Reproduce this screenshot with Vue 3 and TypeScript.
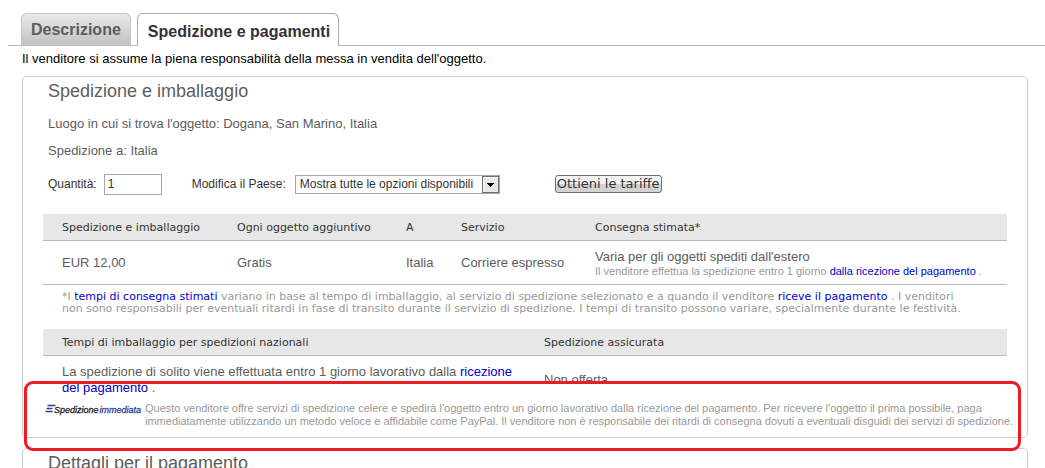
<script setup lang="ts">
import { ref } from 'vue'

interface ShippingOption {
  cost: string
  additional: string
  destination: string
  service: string
  estimate: string
}

const quantity = ref('1')
const country = ref('all')
const options: ShippingOption[] = [
  {
    cost: 'EUR 12,00',
    additional: 'Gratis',
    destination: 'Italia',
    service: 'Corriere espresso',
    estimate: "Varia per gli oggetti spediti dall'estero",
  },
]
</script>

<template>
  <div class="page">
    <nav class="tabs">
      <a class="tab" href="#descrizione">Descrizione</a>
      <a class="tab active" href="#spedizione" aria-current="page">Spedizione e pagamenti</a>
    </nav>

    <main class="content">
      <p class="intro">Il venditore si assume la piena responsabilità della messa in vendita dell'oggetto.</p>

      <section id="spedizione" class="panel">
        <h2>Spedizione e imballaggio</h2>
        <p class="fact">Luogo in cui si trova l'oggetto: Dogana, San Marino, Italia</p>
        <p class="fact">Spedizione a: Italia</p>

        <form class="rates" @submit.prevent>
          <label for="quantity">Quantità:</label>
          <input id="quantity" v-model="quantity" type="text" />
          <label class="country-label" for="country">Modifica il Paese:</label>
          <span class="select">
            <select id="country" v-model="country">
              <option value="all">Mostra tutte le opzioni disponibili</option>
            </select>
            <svg class="arrow" viewBox="0 0 17 17" aria-hidden="true">
              <rect x="0.5" y="0.5" width="16" height="16" fill="#e9e9e9" stroke="#6f6f6f" />
              <path d="M1.5 15.5v-14h14" fill="none" stroke="#fff" />
              <path d="M5 7h7v1h-1v1h-1v1H9v1H8v-1H7V9H6V8H5z" fill="#000" />
            </svg>
          </span>
          <button type="submit">Ottieni le tariffe</button>
        </form>

        <table class="grid options">
          <thead>
            <tr>
              <th class="c-cost">Spedizione e imballaggio</th>
              <th class="c-extra">Ogni oggetto aggiuntivo</th>
              <th class="c-to">A</th>
              <th class="c-service">Servizio</th>
              <th>Consegna stimata*</th>
            </tr>
          </thead>
          <tbody>
            <tr v-for="option in options" :key="option.service">
              <td>{{ option.cost }}</td>
              <td>{{ option.additional }}</td>
              <td>{{ option.destination }}</td>
              <td>{{ option.service }}</td>
              <td>
                {{ option.estimate }}
                <small>Il venditore effettua la spedizione entro 1 giorno <a href="#ricezione">dalla ricezione del pagamento</a> .</small>
              </td>
            </tr>
          </tbody>
        </table>

        <p class="footnote">
          *I <a href="#tempi">tempi di consegna stimati</a> variano in base al tempo di imballaggio, al servizio di spedizione selezionato e a quando il venditore <a href="#ricezione">riceve il pagamento</a> . I venditori<br />
          non sono responsabili per eventuali ritardi in fase di transito durante il servizio di spedizione. I tempi di transito possono variare, specialmente durante le festività.
        </p>

        <table class="grid handling">
          <thead>
            <tr>
              <th>Tempi di imballaggio per spedizioni nazionali</th>
              <th>Spedizione assicurata</th>
            </tr>
          </thead>
          <tbody>
            <tr>
              <td>
                La spedizione di solito viene effettuata entro 1 giorno lavorativo dalla <a href="#ricezione">ricezione<br />del pagamento</a> .
              </td>
              <td>Non offerta</td>
            </tr>
          </tbody>
        </table>

        <div class="notice">
          <svg class="logo" viewBox="0 0 97 14" role="img" aria-label="Spedizione immediata">
            <path d="M2.500 3.500h8M1.500 6.500h6M0.500 9.500h7" fill="none" stroke="#2a3f94" stroke-width="1.500" />
            <text x="9" y="11" class="word"><tspan class="dark">Spedizione</tspan><tspan class="blue" dx="1">immediata</tspan></text>
          </svg>
          <p>
            Questo venditore offre servizi di spedizione celere e spedirà l'oggetto entro un giorno lavorativo dalla ricezione del pagamento. Per ricevere l'oggetto il prima possibile, paga<br />
            immediatamente utilizzando un metodo veloce e affidabile come PayPal. Il venditore non è responsabile dei ritardi di consegna dovuti a eventuali disguidi dei servizi di spedizione.
          </p>
          <div class="highlight"></div>
        </div>
      </section>

      <section class="panel">
        <h2>Dettagli per il pagamento</h2>
      </section>
    </main>
  </div>
</template>

<style>
body {
  margin: 0;
  background: #fff;
}
</style>

<style scoped>
.page {
  height: 100vh;
  overflow: hidden;
  box-sizing: border-box;
  padding: 13px 0 0 8px;
  font-family: "Liberation Sans", Arial, sans-serif;
  font-size: 12px;
  color: #000;
}

p,
h2 {
  margin: 0;
}

a {
  color: #00c;
  text-decoration: none;
}

.tabs {
  display: flex;
  gap: 6px;
  height: 32px;
  padding-left: 13px;
  border-bottom: 1px solid #bbb;
}

.tab {
  box-sizing: border-box;
  height: 32px;
  padding: 0 9px;
  border: 1px solid #c4c4c4;
  border-bottom: 0;
  border-radius: 6px 6px 0 0;
  background: linear-gradient(#e9e9e9, #c2c2c2);
  color: #5c5c5c;
  font-size: 16px;
  font-weight: bold;
  line-height: 32px;
}

.tab.active {
  height: 33px;
  padding: 0 8px 0 10px;
  border-color: #aaa;
  background: #fff;
  color: #333;
  line-height: 35px;
}

.content {
  padding: 0 17px 0 14px;
}

.intro {
  padding: 5px 0 9px;
  font-size: 13px;
  line-height: 16px;
}

.panel {
  border: 1px solid #ccc;
  border-radius: 5px;
  padding: 0 20px 9px;
  margin-bottom: 10px;
}

.panel h2 {
  padding: 3px 0 10px 5px;
  color: #5d5d5d;
  font-size: 18px;
  font-weight: normal;
  line-height: 22px;
}

.fact {
  padding: 4px 0 7px 5px;
  color: #5d5d5d;
  font-size: 13px;
  line-height: 16px;
}

.rates {
  display: flex;
  align-items: center;
  height: 22px;
  padding: 7px 0 19px 5px;
  color: #333;
}

.rates input {
  box-sizing: border-box;
  width: 58px;
  height: 21px;
  margin-left: 7px;
  padding: 0 3px;
  border: 1px solid #a5a5aa;
  border-radius: 0;
  background: #fff;
  color: #333;
  font: 12px "Liberation Sans", Arial, sans-serif;
}

.country-label {
  margin-left: 30px;
}

.select {
  position: relative;
  display: block;
  width: 205px;
  height: 19px;
  margin-left: 9px;
}

.select select {
  appearance: none;
  box-sizing: border-box;
  width: 100%;
  height: 100%;
  padding: 0 18px 0 4px;
  border: 1px solid #a5a5aa;
  border-radius: 0;
  background: #fff;
  color: #333;
  font: 12px "Liberation Sans", Arial, sans-serif;
}

.arrow {
  position: absolute;
  top: 1px;
  right: 1px;
  width: 17px;
  height: 17px;
  pointer-events: none;
}

.rates button {
  height: 18px;
  margin-left: 55px;
  padding: 0 1px;
  border: 1px solid #707070;
  border-radius: 3px;
  background: linear-gradient(#f2f2f2 50%, #d2d2d2 50%);
  color: #333;
  font: 13px/16px "DejaVu Sans", Verdana, sans-serif;
}

.grid {
  width: 100%;
  border-collapse: separate;
  border-spacing: 0;
  table-layout: fixed;
}

.grid th {
  height: 26px;
  padding: 0 0 0 19px;
  border-bottom: 1px solid #bbb;
  background: #e7e7e7;
  color: #333;
  font: 11px "DejaVu Sans", Verdana, sans-serif;
  text-align: left;
}

.grid td {
  padding: 0 0 0 19px;
  color: #5d5d5d;
  font-size: 13px;
  line-height: 16px;
}

.options td {
  height: 43px;
  border-bottom: 1px solid #bbb;
}

.grid .c-cost {
  width: 156px;
}

.grid .c-extra {
  width: 150px;
}

.grid .c-to {
  width: 36px;
}

.grid .c-service {
  width: 115px;
}

.grid small {
  display: block;
  color: #999;
  font-size: 11px;
  line-height: 12px;
}

.footnote {
  padding: 6px 0 14px 19px;
  color: #999;
  font: 11px/12px "DejaVu Sans", Verdana, sans-serif;
  white-space: nowrap;
}

.grid.handling td {
  height: 45px;
  padding-top: 1px;
  line-height: 16px;
}

.notice {
  position: relative;
  display: flex;
  gap: 3px;
  padding-left: 2px;
  color: #999;
  font-size: 11px;
  line-height: 13px;
  white-space: nowrap;
}

.logo {
  flex: none;
  width: 97px;
  height: 14px;
}

.word {
  font: italic 9px "Liberation Sans", Arial, sans-serif;
  stroke-width: 0.3px;
}

.dark {
  fill: #222;
  stroke: #222;
}

.blue {
  fill: #2a3f94;
  stroke: #2a3f94;
}

.highlight {
  position: absolute;
  inset: -21px -14px -23px -19px;
  border: 3px solid #ed1c24;
  border-radius: 9px;
  pointer-events: none;
}
</style>
